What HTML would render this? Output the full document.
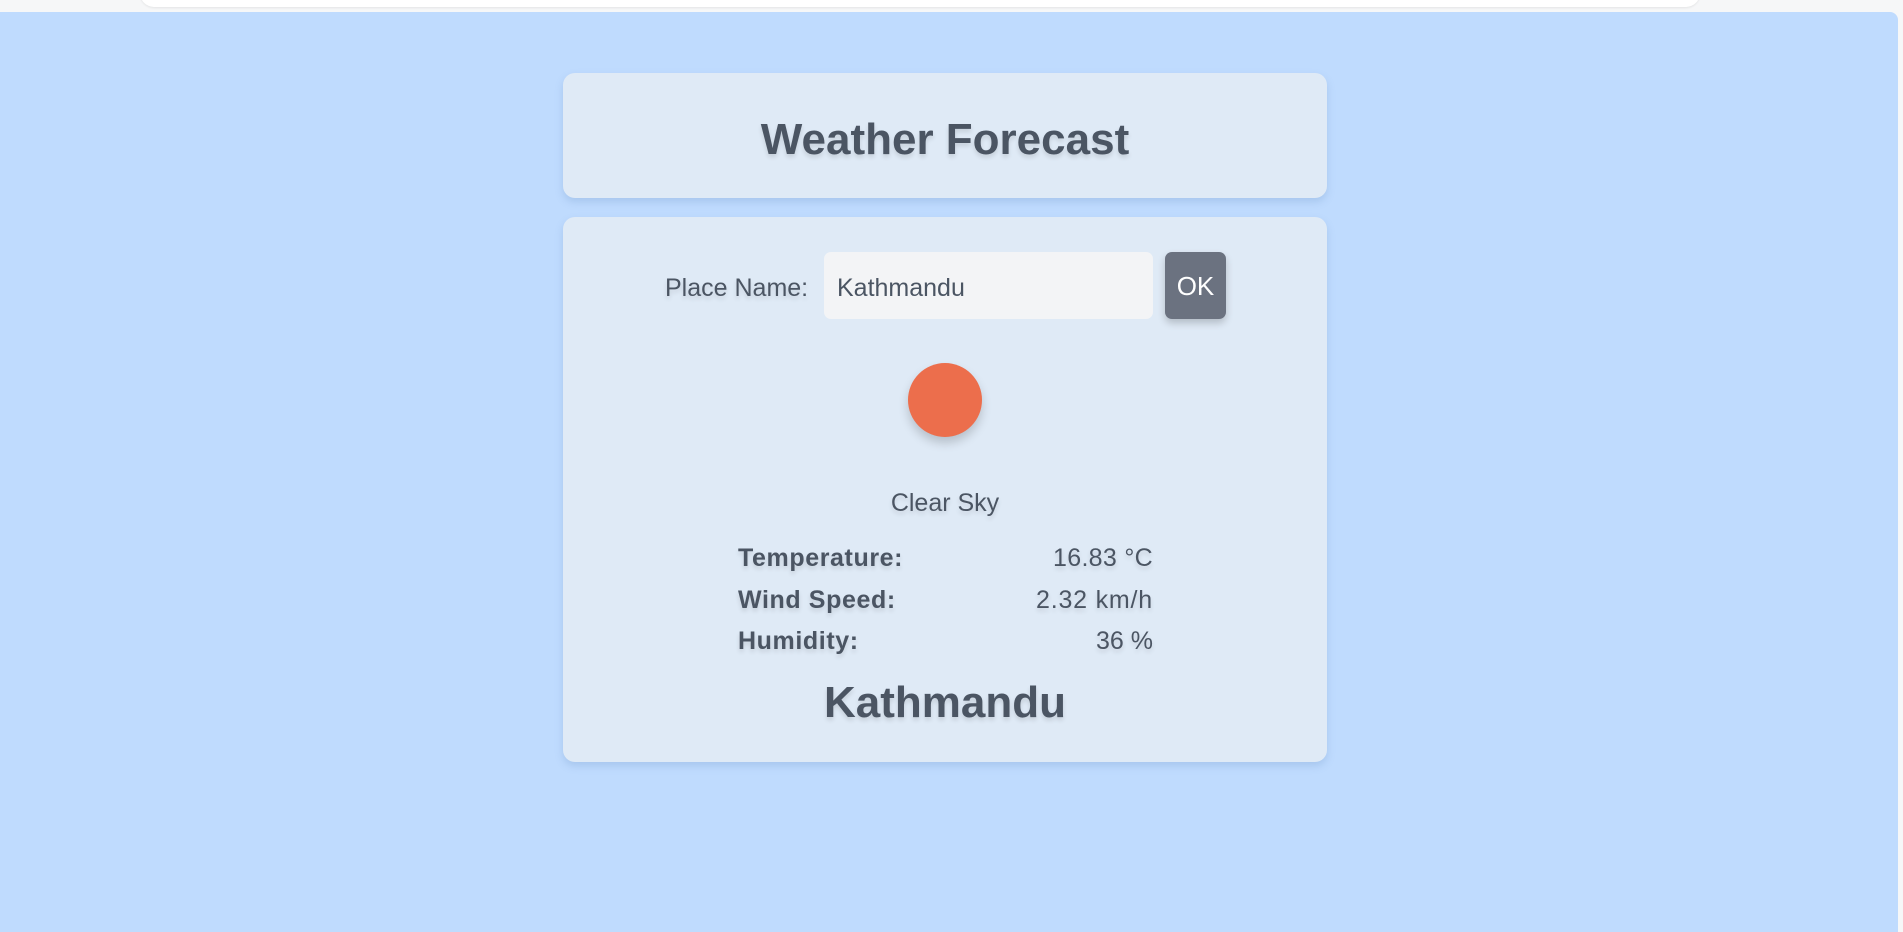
<!DOCTYPE html>
<html><head><meta charset="utf-8"><style>
html,body{margin:0;padding:0;width:1903px;height:918px;overflow:hidden;background:#f6f7f8;font-family:"Liberation Sans",sans-serif;color:#4b5563}
.topbar{position:absolute;left:140px;top:-10px;width:1560px;height:17px;background:#fff;border-radius:0 0 14px 14px;box-shadow:0 1px 2px rgba(0,0,0,.08)}
.bg{position:absolute;left:0;top:12px;width:1898px;height:920px;background:#bfdbfe;border-radius:0 8px 0 0}
.card{position:absolute;left:563px;width:764px;background:#dfeaf6;border-radius:12px;box-shadow:0 4px 8px rgba(100,140,190,.25)}
.t{position:absolute;white-space:nowrap;text-shadow:0 3px 5px rgba(0,0,0,.12)}
</style></head><body>
<div class="topbar"></div>
<div class="bg"></div>
<div class="card" style="top:73px;height:125px"></div>
<div class="t" style="left:0;width:1890px;text-align:center;top:115px;font-size:44px;font-weight:bold">Weather Forecast</div>
<div class="card" style="top:217px;height:545px"></div>
<div class="t" style="left:665px;top:274px;font-size:25px">Place Name:</div>
<div style="position:absolute;left:824px;top:252px;width:329px;height:67px;background:#f3f4f6;border-radius:7px"></div>
<div class="t" style="left:837px;top:274px;font-size:25px;text-shadow:none">Kathmandu</div>
<div style="position:absolute;left:1165px;top:252px;width:61px;height:67px;background:#6b7280;border-radius:7px;box-shadow:0 4px 8px rgba(0,0,0,.2);color:#fff;font-size:26px;text-align:center;line-height:69px">OK</div>
<div style="position:absolute;left:908px;top:363px;width:74px;height:74px;border-radius:50%;background:#ec6e4c;box-shadow:0 6px 10px rgba(0,0,0,.18)"></div>
<div class="t" style="left:0;width:1890px;text-align:center;top:489px;font-size:25px">Clear Sky</div>
<div class="t" style="left:738px;top:544px;font-size:25px;font-weight:bold;letter-spacing:0.6px">Temperature:</div>
<div class="t" style="left:738px;top:586px;font-size:25px;font-weight:bold;letter-spacing:0.6px">Wind Speed:</div>
<div class="t" style="left:738px;top:627px;font-size:25px;font-weight:bold;letter-spacing:0.6px">Humidity:</div>
<div class="t" style="right:750px;top:544px;font-size:25px;letter-spacing:0.3px">16.83 °C</div>
<div class="t" style="right:750px;top:586px;font-size:25px;letter-spacing:0.8px">2.32 km/h</div>
<div class="t" style="right:750px;top:627px;font-size:25px">36 %</div>
<div class="t" style="left:0;width:1890px;text-align:center;top:678px;font-size:44px;font-weight:bold">Kathmandu</div>
</body></html>
